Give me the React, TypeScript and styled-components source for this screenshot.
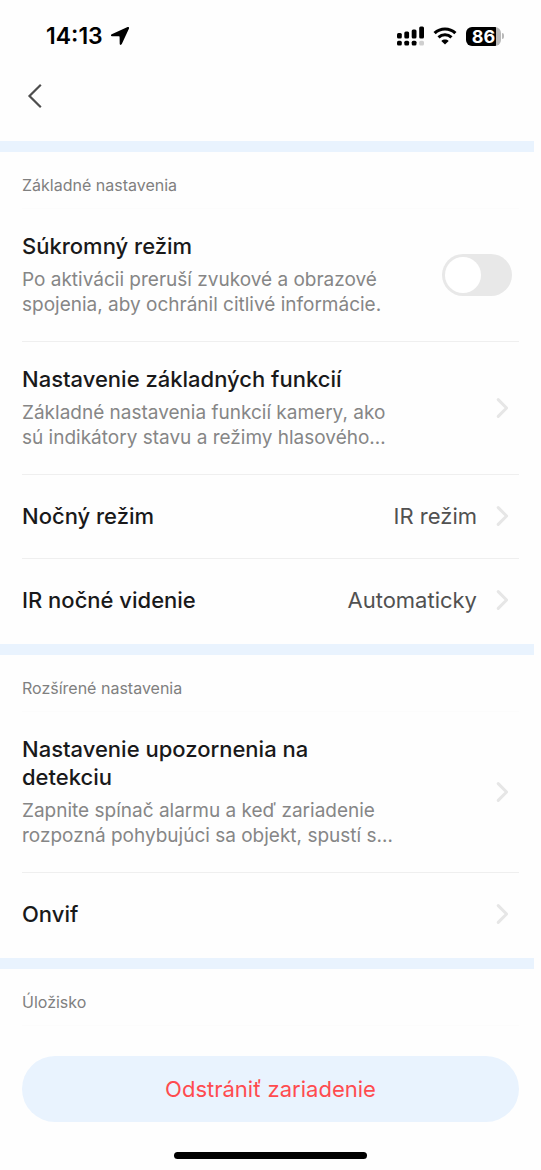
import React from "react";
import styled, { createGlobalStyle } from "styled-components";

const GlobalStyle = createGlobalStyle`
  * { box-sizing: border-box; }
  body {
    margin: 0;
    padding-right: 7px;
    background: #fefefe;
    font-family: Inter, "Liberation Sans", sans-serif;
    color: #19191a;
  }
  button, input { font: inherit; }
`;

const Screen = styled.div`
  display: flex;
  flex-direction: column;
`;

const StatusBar = styled.header`
  display: flex;
  align-items: center;
  justify-content: space-between;
  height: 72px;
  padding: 0 30px 0 46px;
`;

const StatusGroup = styled.div<{ $gap: number }>`
  display: flex;
  align-items: center;
  gap: ${(p) => p.$gap}px;
`;

const Clock = styled.time`
  font-size: 23px;
  line-height: 28px;
  font-weight: 600;
  color: #000;
`;

const Battery = styled.div`
  display: flex;
  align-items: center;
  gap: 1px;
`;

const BatteryBody = styled.span`
  width: 35px;
  height: 19px;
  border-radius: 6px;
  background: linear-gradient(to right, #000 30px, #b9b9b9 30px);
  color: #fff;
  font-size: 18px;
  line-height: 19px;
  font-weight: 700;
  text-align: center;
`;

const BatteryCap = styled.span`
  width: 2px;
  height: 6px;
  border-radius: 0 2px 2px 0;
  background: #b9b9b9;
`;

const NavBar = styled.nav`
  display: flex;
  height: 69px;
  padding: 4px 15px;
`;

const BackButton = styled.button`
  display: grid;
  place-items: center;
  width: 40px;
  height: 40px;
  padding: 0;
  border: 0;
  background: none;
`;

const Section = styled.section<{ $last?: boolean }>`
  border-top: 11px solid #e9f3fe;
  padding: 0 15px ${(p) => (p.$last ? 0 : 2)}px 22px;
`;

const SectionTitle = styled.h2`
  height: 57px;
  margin: 0;
  padding-top: 22px;
  border-bottom: 1px solid #fcfcfc;
  font-size: 16px;
  line-height: 22px;
  font-weight: 400;
  color: #808080;
`;

const List = styled.ul`
  margin: 0;
  padding: 0;
  list-style: none;
`;

const Item = styled.li`
  & + & {
    border-top: 1px solid #efefef;
  }
`;

const Row = styled.div`
  display: flex;
  align-items: center;
  justify-content: space-between;
  gap: 20px;
  width: 100%;
  min-height: 83px;
  padding: 23px 7px 24px 0;
  border: 0;
  background: none;
  color: inherit;
  text-align: left;
`;

const RowText = styled.span`
  display: flex;
  flex-direction: column;
  gap: 7px;
  max-width: 380px;
`;

const Title = styled.span`
  font-size: 22px;
  line-height: 28px;
  font-weight: 500;
`;

const Description = styled.span`
  font-size: 19px;
  line-height: 25px;
  color: #868686;
`;

const Trailing = styled.span`
  display: flex;
  align-items: center;
  gap: 19px;
  flex-shrink: 0;
`;

const Value = styled.span`
  font-size: 22px;
  line-height: 28px;
  color: #515151;
`;

const Switch = styled.input`
  display: flex;
  align-items: center;
  flex-shrink: 0;
  appearance: none;
  width: 70px;
  height: 42px;
  margin: 0;
  padding: 0 3px;
  border-radius: 21px;
  background: #e8e8e8;

  &::before {
    content: "";
    width: 36px;
    height: 36px;
    border-radius: 50%;
    background: #fff;
  }

  &:checked {
    justify-content: flex-end;
    background: #3a8ef6;
  }
`;

const RemoveButton = styled.button`
  height: 66px;
  margin: 30px 15px 30px 22px;
  border: 0;
  border-radius: 33px;
  background: #e9f3fe;
  color: #ff4b4f;
  font-size: 22px;
  line-height: 28px;
`;

const HomeIndicator = styled.div`
  align-self: center;
  width: 193px;
  height: 7px;
  margin: 0 0 11px 7px;
  border-radius: 4px;
  background: #000;
`;

const Chevron = () => (
  <svg width="16" height="22" viewBox="0 0 16 22" fill="none" aria-hidden="true">
    <path d="M2.2 2.6 10.6 11 2.2 19.4" stroke="#e6e6e6" strokeWidth="3" strokeLinecap="round" strokeLinejoin="round" />
  </svg>
);

const LocationArrow = () => (
  <svg width="20" height="20" viewBox="0 0 20 20" aria-hidden="true">
    <path d="M17.6 1.1 1.7 8.2C.5 8.8.8 10.2 2 10.2l7 .1c.4 0 .6.2.6.6l.1 6.9c0 1.3 1.5 1.5 2.1.3L19 2.5c.4-1-.4-1.800-1.400-1.400Z" />
  </svg>
);

const Signal = () => (
  <svg width="27" height="20" viewBox="0 0 27 20" aria-hidden="true">
    <rect x="0" y="7" width="4.8" height="5.6" rx="1.5" />
    <rect x="7.3" y="5.5" width="4.8" height="7.1" rx="1.5" />
    <rect x="14.7" y="3.5" width="4.8" height="9.1" rx="1.5" />
    <rect x="22.2" y="0.6" width="4.8" height="12" rx="1.5" />
    <rect x="0" y="14.7" width="4.8" height="4.8" rx="1.5" />
    <rect x="7.3" y="14.7" width="4.8" height="4.8" rx="1.5" />
    <rect x="14.7" y="14.7" width="4.8" height="4.8" rx="1.5" />
    <rect x="22.2" y="14.7" width="4.8" height="4.8" rx="1.5" fill="#cfcfcf" />
  </svg>
);

const Wifi = () => (
  <svg width="24" height="18" viewBox="0 0 24 18" fill="none" aria-hidden="true">
    <path d="M1.6 6.2C7.5.6 16.5.6 22.4 6.2" stroke="#000" strokeWidth="3.2" />
    <path d="M5.5 10.3c3.7-3.5 9.3-3.5 13 0" stroke="#000" strokeWidth="3" />
    <path d="M12 17.6 8.3 13.9c2.1-1.9 5.300-1.900 7.400 0Z" fill="#000" />
  </svg>
);

type LinkRowProps = { title: string; description?: string; value?: string };

const LinkRow = ({ title, description, value }: LinkRowProps) => (
  <Item>
    <Row as="button">
      <RowText>
        <Title>{title}</Title>
        {description && <Description>{description}</Description>}
      </RowText>
      <Trailing>
        {value && <Value>{value}</Value>}
        <Chevron />
      </Trailing>
    </Row>
  </Item>
);

export default function App() {
  return (
    <Screen>
      <GlobalStyle />
      <StatusBar>
        <StatusGroup $gap={7}>
          <Clock>14:13</Clock>
          <LocationArrow />
        </StatusGroup>
        <StatusGroup $gap={9}>
          <Signal />
          <Wifi />
          <Battery>
            <BatteryBody>86</BatteryBody>
            <BatteryCap />
          </Battery>
        </StatusGroup>
      </StatusBar>
      <NavBar>
        <BackButton aria-label="Späť">
          <svg width="18" height="26" viewBox="0 0 18 26" fill="none" aria-hidden="true">
            <path d="M14.800 1.800 3.500 13l11.300 11.200" stroke="#4d4d4d" strokeWidth="2.200" />
          </svg>
        </BackButton>
      </NavBar>
      <main>
        <Section>
          <SectionTitle>Základné nastavenia</SectionTitle>
          <List>
            <Item>
              <Row as="label">
                <RowText>
                  <Title>Súkromný režim</Title>
                  <Description>
                    Po aktivácii preruší zvukové a obrazové spojenia, aby ochránil citlivé informácie.
                  </Description>
                </RowText>
                <Switch type="checkbox" role="switch" />
              </Row>
            </Item>
            <LinkRow
              title="Nastavenie základných funkcií"
              description="Základné nastavenia funkcií kamery, ako sú indikátory stavu a režimy hlasového…"
            />
            <LinkRow title="Nočný režim" value="IR režim" />
            <LinkRow title="IR nočné videnie" value="Automaticky" />
          </List>
        </Section>
        <Section>
          <SectionTitle>Rozšírené nastavenia</SectionTitle>
          <List>
            <LinkRow
              title="Nastavenie upozornenia na detekciu"
              description="Zapnite spínač alarmu a keď zariadenie rozpozná pohybujúci sa objekt, spustí s…"
            />
            <LinkRow title="Onvif" />
          </List>
        </Section>
        <Section $last>
          <SectionTitle>Úložisko</SectionTitle>
        </Section>
      </main>
      <RemoveButton>Odstrániť zariadenie</RemoveButton>
      <HomeIndicator />
    </Screen>
  );
}
